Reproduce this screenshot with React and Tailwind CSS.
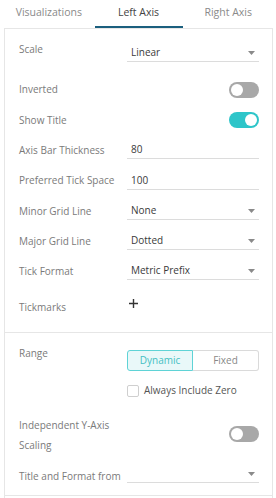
import React from 'react';

const Caret = () => (
  <svg width="7" height="4" viewBox="0 0 7 4" className="shrink-0">
    <path d="M0 0 L7 0 L3.5 4 Z" fill="#8a8a8a" />
  </svg>
);

const Toggle = ({ on }) => (
  <div
    className={`w-[30px] h-[16px] rounded-full flex items-center px-[2px] ${
      on ? 'bg-[#2ec5c9] justify-end' : 'bg-[#a8a8a8] justify-start'
    }`}
  >
    <div className="w-[12px] h-[12px] rounded-full bg-white" />
  </div>
);

const Row = ({ label, h = 'h-[30px]', children }) => (
  <div className={`flex items-center ${h}`}>
    <div className="w-[108px] shrink-0 text-[10px] text-[#7a7a7a]">{label}</div>
    <div className="flex-1 flex items-center">{children}</div>
  </div>
);

const Field = ({ value, select }) => (
  <div className="flex-1 h-[18px] flex items-center justify-between border-b border-[#dcdcdc] pl-[4px] pr-[4px]">
    <span className="text-[10px] text-[#3a3a3a]">{value}</span>
    {select && <Caret />}
  </div>
);

export default function App() {
  const tabs = ['Visualizations', 'Left Axis', 'Right Axis'];

  return (
    <div className="w-[276px] h-[498px] bg-white overflow-hidden" style={{ fontFamily: '"Open Sans", Arial, sans-serif' }}>
      <div className="ml-[4px] w-[269px] flex h-[29px] border-b border-[#e6e6e6]">
        {tabs.map((t, i) => (
          <div key={t} className="flex-1 flex flex-col items-center">
            <div className={`flex-1 flex items-center text-[10.5px] ${i === 1 ? 'text-[#444]' : 'text-[#8a8a8a]'}`}>
              {t}
            </div>
            <div className={`h-[2px] w-[88px] ${i === 1 ? 'bg-[#1b5f7e]' : 'bg-transparent'}`} />
          </div>
        ))}
      </div>

      <div className="ml-[4px] w-[269px] h-[469px] border-x border-[#e6e6e6] flex flex-col">
        <div className="pl-[14px] pr-[13px] pt-[5px]">
          <div className="flex h-[30px]">
            <div className="w-[108px] shrink-0 pt-[9px] text-[10px] leading-[12px] text-[#7a7a7a]">Scale</div>
            <div className="flex-1 flex items-start">
              <div className="flex-1 h-[18px] mt-[10px] flex items-center justify-between border-b border-[#dcdcdc] pl-[4px] pr-[4px]">
                <span className="text-[10px] text-[#3a3a3a]">Linear</span>
                <Caret />
              </div>
            </div>
          </div>

          <div className="mt-[10px]">
            <Row label="Inverted" h="h-[31px]">
              <div className="flex-1 flex justify-end">
                <Toggle on={false} />
              </div>
            </Row>
            <Row label="Show Title">
              <div className="flex-1 flex justify-end">
                <Toggle on />
              </div>
            </Row>
            <Row label="Axis Bar Thickness">
              <Field value="80" />
            </Row>
            <Row label="Preferred Tick Space" h="h-[31px]">
              <Field value="100" />
            </Row>
            <Row label="Minor Grid Line">
              <Field value="None" select />
            </Row>
            <Row label="Major Grid Line">
              <Field value="Dotted" select />
            </Row>
            <Row label="Tick Format">
              <Field value="Metric Prefix" select />
            </Row>
          </div>

          <div className="flex h-[46px]">
            <div className="w-[108px] shrink-0 pt-[15px] text-[10px] leading-[12px] text-[#7a7a7a]">Tickmarks</div>
            <div className="pt-[13px] pl-[2px]">
              <svg width="9" height="9" viewBox="0 0 9 9">
                <path d="M4.5 0 V9 M0 4.5 H9" stroke="#333" strokeWidth="1.4" />
              </svg>
            </div>
          </div>
        </div>

        <div className="border-t border-[#e6e6e6] pl-[14px] pr-[13px] pt-[17px] flex-1 flex flex-col">
          <div className="flex">
            <div className="w-[108px] shrink-0 -mt-[3px] text-[10px] leading-[12px] text-[#7a7a7a]">Range</div>
            <div className="flex-1">
              <div className="flex h-[21px] text-[10px]">
                <div className="w-[66px] flex items-center justify-center rounded-l-[3px] border border-[#5fd3d6] bg-[#e9f8f9] text-[#45bfc3]">
                  Dynamic
                </div>
                <div className="flex-1 flex items-center justify-center rounded-r-[3px] border border-l-0 border-[#dadada] text-[#888]">
                  Fixed
                </div>
              </div>
              <div className="flex items-center mt-[12px]">
                <div className="w-[12px] h-[12px] border border-[#cfcfcf] rounded-[2px]" />
                <span className="ml-[5px] text-[10px] text-[#555]">Always Include Zero</span>
              </div>
            </div>
          </div>

          <div className="flex items-center mt-[17px]">
            <div className="w-[108px] shrink-0 text-[10px] leading-[20px] text-[#7a7a7a]">
              Independent Y-Axis
              <br />
              Scaling
            </div>
            <div className="flex-1 flex justify-end -mt-[3px]">
              <Toggle on={false} />
            </div>
          </div>

          <div className="flex items-start h-[30px] mt-[7px]">
            <div className="w-[108px] shrink-0 pt-[8px] text-[10px] leading-[12px] text-[#7a7a7a]">Title and Format from</div>
            <div className="flex-1 h-[21px] flex items-center justify-end border-b border-[#dcdcdc] pr-[4px] pt-[3px]">
              <Caret />
            </div>
          </div>
          <div className="flex-1" />
        </div>
        <div className="h-[1px] bg-[#e6e6e6] mb-[2px]" />
      </div>
    </div>
  );
}
